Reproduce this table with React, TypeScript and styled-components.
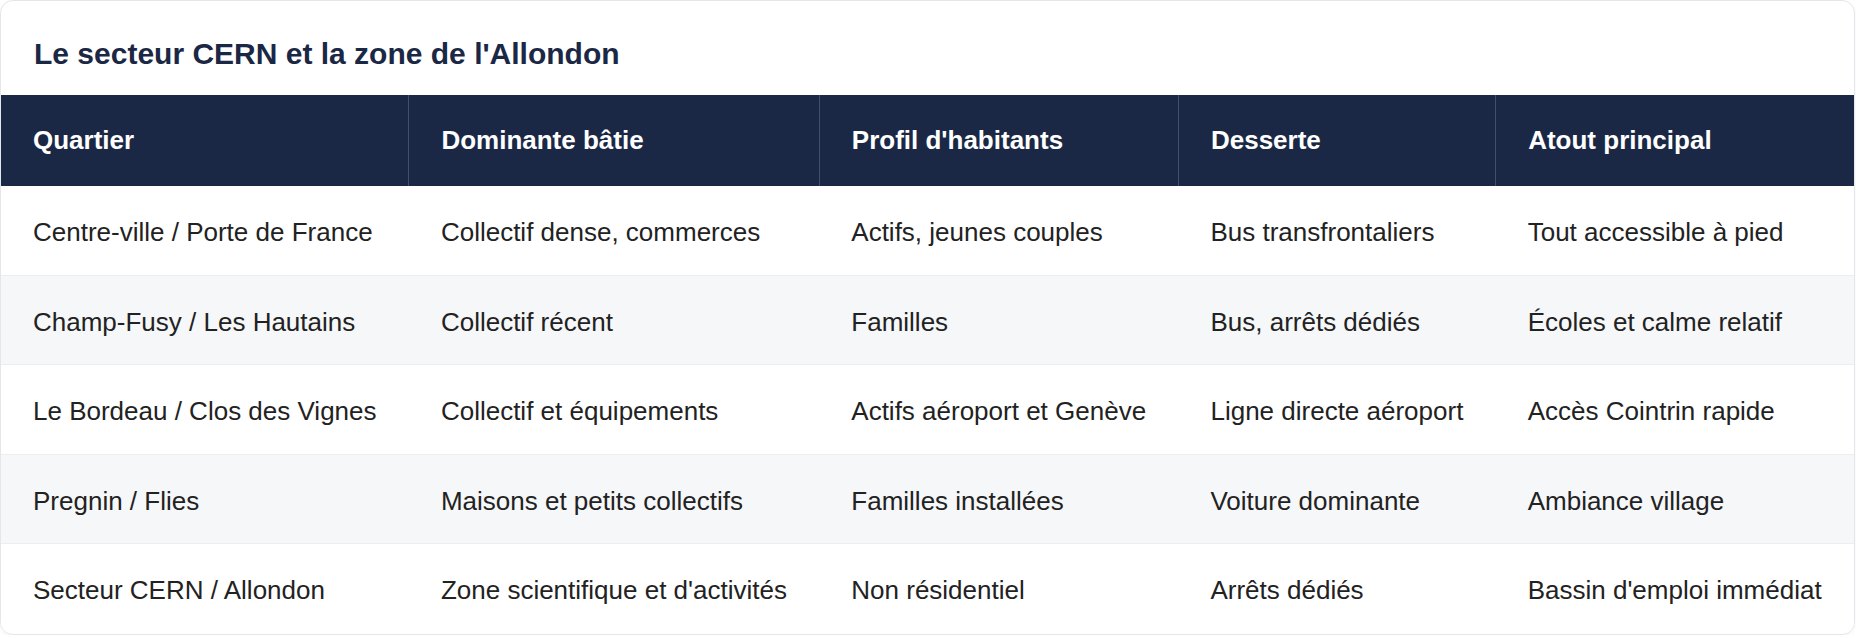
import styled, { createGlobalStyle } from 'styled-components';

const GlobalStyle = createGlobalStyle`
  html, body {
    margin: 0;
    padding: 0;
    background: #ffffff;
  }
  body {
    font-family: 'Liberation Sans', Arial, Helvetica, sans-serif;
  }
`;

const columns = [
  'Quartier',
  'Dominante bâtie',
  "Profil d'habitants",
  'Desserte',
  'Atout principal',
];

const rows = [
  [
    'Centre-ville / Porte de France',
    'Collectif dense, commerces',
    'Actifs, jeunes couples',
    'Bus transfrontaliers',
    'Tout accessible à pied',
  ],
  [
    'Champ-Fusy / Les Hautains',
    'Collectif récent',
    'Familles',
    'Bus, arrêts dédiés',
    'Écoles et calme relatif',
  ],
  [
    'Le Bordeau / Clos des Vignes',
    'Collectif et équipements',
    'Actifs aéroport et Genève',
    'Ligne directe aéroport',
    'Accès Cointrin rapide',
  ],
  [
    'Pregnin / Flies',
    'Maisons et petits collectifs',
    'Familles installées',
    'Voiture dominante',
    'Ambiance village',
  ],
  [
    'Secteur CERN / Allondon',
    "Zone scientifique et d'activités",
    'Non résidentiel',
    'Arrêts dédiés',
    "Bassin d'emploi immédiat",
  ],
];

const App = () => {
  return (
    <>
      <GlobalStyle />
      <Card>
        <Title>Le secteur CERN et la zone de l'Allondon</Title>
        <Table>
          <thead>
            <tr>
              {columns.map((col) => (
                <HeadCell key={col}>{col}</HeadCell>
              ))}
            </tr>
          </thead>
          <tbody>
            {rows.map((row, i) => (
              <Row key={row[0]} $striped={i % 2 === 1} $last={i === rows.length - 1}>
                {row.map((cell) => (
                  <Cell key={cell}>{cell}</Cell>
                ))}
              </Row>
            ))}
          </tbody>
        </Table>
      </Card>
    </>
  );
};

const Card = styled.section`
  background-color: #fff;
  border: 1.5px solid #e3e6eb;
  border-radius: 13px;
  overflow: hidden;
  box-shadow: 0 2px 4px rgba(15, 23, 42, 0.04);
  margin-right: 1px;
  padding-bottom: 1px;
`;

const Title = styled.h2`
  margin: 0;
  padding: 36px 33px 24px;
  color: #1b2845;
  font-size: 30px;
  font-weight: 700;
  line-height: normal;
`;

const Table = styled.table`
  width: 100%;
  border-collapse: collapse;
  font-size: 26px;
`;

const HeadCell = styled.th`
  background-color: #1b2845;
  color: #fff;
  font-weight: 700;
  text-align: left;
  padding: 30px 32px;
  line-height: normal;
  border-right: 1px solid rgba(255, 255, 255, 0.18);
  white-space: nowrap;

  &:last-child {
    border-right: none;
  }
`;

const Row = styled.tr<{ $striped: boolean; $last: boolean }>`
  background-color: ${(p) => (p.$striped ? '#f6f7f9' : '#ffffff')};
  border-bottom: ${(p) => (p.$last ? 'none' : '1px solid #eceef2')};
`;

const Cell = styled.td`
  padding: 31px 32px 26.6px;
  color: #222;
  line-height: normal;
  white-space: nowrap;
`;

export default App;
